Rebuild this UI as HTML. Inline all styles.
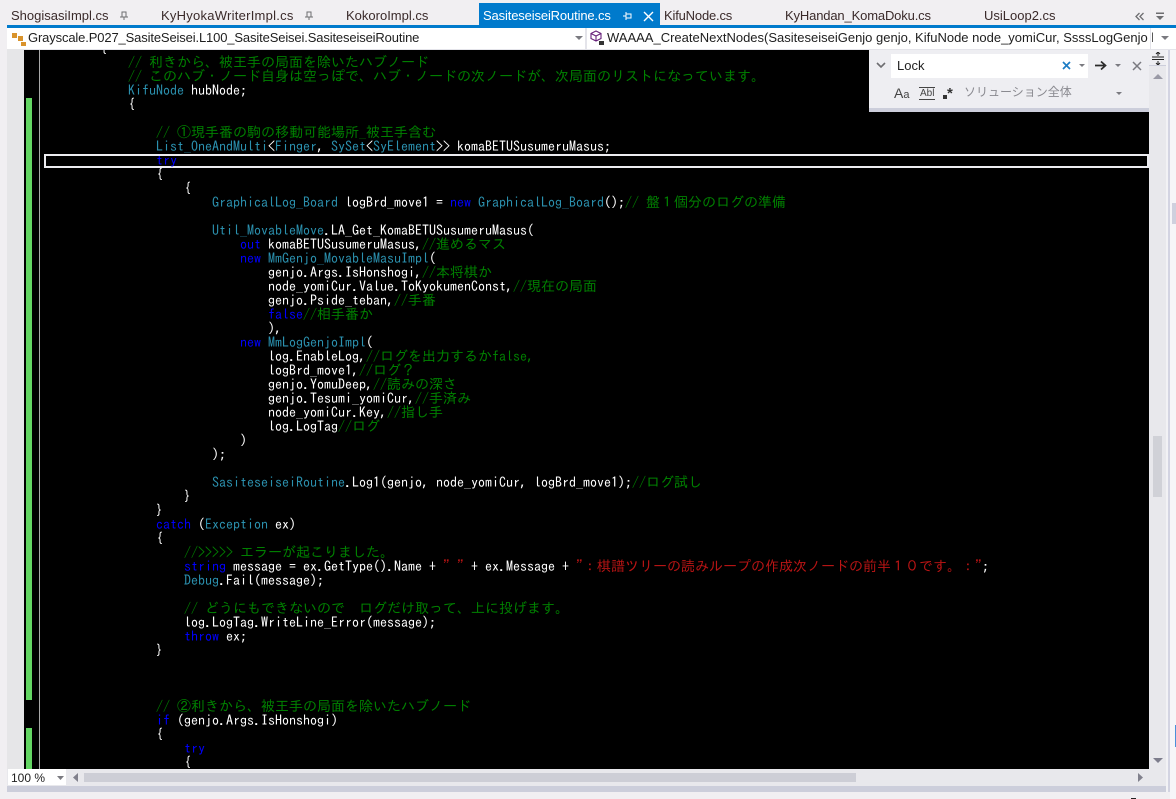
<!DOCTYPE html>
<html lang="ja"><head><meta charset="utf-8"><style>
html,body{margin:0;padding:0;width:1176px;height:799px;overflow:hidden;background:#f1eff2}
div,span.a,svg{position:absolute}
.t{position:absolute;top:7px;font:13px/18px "Liberation Sans","Noto Sans CJK JP",sans-serif;color:#3a2a2a;white-space:nowrap}
.nav{font:13px/18px "Liberation Sans",sans-serif;color:#1e1e1e;white-space:nowrap;position:absolute;letter-spacing:-.14px}
pre{position:absolute;left:44px;top:41px;margin:0;font:14px/14px "IPAGothic","Noto Sans CJK JP",monospace;color:#fff}
i{font-style:normal;color:#008000}b{font-weight:normal;color:#2b91af}u{text-decoration:none;color:#0000ff}s{text-decoration:none;color:#b81414}
</style></head><body>
<!-- tabs -->
<div style="left:0;top:0;width:1176px;height:25px;background:#f1eff2"></div>
<div style="left:479px;top:3px;width:181px;height:22px;background:#007acc"></div>
<span class="t" style="left:11px">ShogisasiImpl.cs</span>
<span class="t" style="left:161px;letter-spacing:.25px">KyHyokaWriterImpl.cs</span>
<span class="t" style="left:346px">KokoroImpl.cs</span>
<span class="t" style="left:483px;color:#fff;letter-spacing:-.14px">SasiteseiseiRoutine.cs</span>
<span class="t" style="left:664px;letter-spacing:-.18px">KifuNode.cs</span>
<span class="t" style="left:785px;letter-spacing:-.15px">KyHandan_KomaDoku.cs</span>
<span class="t" style="left:984px">UsiLoop2.cs</span>
<svg style="left:119px;top:11px" width="10" height="10"><path d="M3 1h4v5H3zM1 6h8M5 6v3" fill="none" stroke="#6d6d70"/></svg>
<svg style="left:304px;top:11px" width="10" height="10"><path d="M3 1h4v5H3zM1 6h8M5 6v3" fill="none" stroke="#6d6d70"/></svg>
<svg style="left:623px;top:11px" width="10" height="10"><path d="M0 5h3M3 1v8M3 3h5v4H3" fill="none" stroke="#fff"/></svg>
<svg style="left:643px;top:11px" width="11" height="11"><path d="M1 1l9 9M10 1l-9 9" fill="none" stroke="#fff" stroke-width="1.4"/></svg>
<svg style="left:1135px;top:12px" width="10" height="9"><path d="M4.500 1L1 4.500l3.500 3.500M8.500 1L5 4.500l3.500 3.500" fill="none" stroke="#6d6d70" stroke-width="1.300"/></svg>
<svg style="left:1156px;top:12px" width="9" height="9"><path d="M0 .5h8v1.500H0zM0 4h8L4 8z" fill="#6d6d70"/></svg>
<div style="left:7px;top:25px;width:1169px;height:3px;background:#007acc"></div>
<!-- nav bar -->
<div style="left:7px;top:28px;width:1169px;height:22px;background:#e4e4ea"></div>
<div style="left:7px;top:28px;width:578px;height:21px;background:#fff"></div>
<div style="left:587px;top:28px;width:563px;height:21px;background:#fff"></div>
<div style="left:1151px;top:28px;width:25px;height:21px;background:#fff"></div>
<svg style="left:11px;top:30px" width="17" height="17"><path d="M1 3h5v5H1zM7 6h5v5H7zM10 12h5v4h-5z" fill="#d9932c"/></svg>
<span class="nav" style="left:28px;top:29px">Grayscale.P027_SasiteSeisei.L100_SasiteSeisei.SasiteseiseiRoutine</span>
<svg style="left:575px;top:36px" width="8" height="5"><path d="M0 0h8L4 4z" fill="#7a7a80"/></svg>
<svg style="left:589px;top:30px" width="17" height="16"><path d="M7 1l5 2.500v5L7 11 2 8.500v-5zM2 3.500L7 6l5-2.500M7 6v5" fill="none" stroke="#68217a" stroke-width="1.100"/><path d="M10 11h5v4h-5z" fill="#333"/></svg>
<span class="nav" style="left:607px;top:29px;width:546px;overflow:hidden;letter-spacing:0">WAAAA_CreateNextNodes(SasiteseiseiGenjo genjo, KifuNode node_yomiCur, SsssLogGenjo log</span>
<svg style="left:1161px;top:36px" width="8" height="5"><path d="M0 0h8L4 4z" fill="#7a7a80"/></svg>
<!-- editor -->
<div style="left:0;top:49px;width:7px;height:750px;background:#f1eff2"></div>
<div style="left:7px;top:49px;width:17px;height:720px;background:#e6e6e8"></div>
<div id="e" style="left:24px;top:50px;width:1125px;height:719px;background:#000;overflow:hidden"></div>
<div style="left:0;top:50px;width:1149px;height:719px;overflow:hidden">
<div style="left:39px;top:0;width:1px;height:719px;background:#a8a8a8"></div>
<div style="left:26px;top:48px;width:6px;height:602px;background:#63d663"></div>
<div style="left:26px;top:678px;width:6px;height:41px;background:#63d663"></div>
<div style="left:44px;top:104px;width:1101px;height:10px;border:2px solid #ececf0"></div>
<pre style="top:-9px">        {
            <i>// 利きから、被王手の局面を除いたハブノード</i>
            <i>// このハブ・ノード自身は空っぽで、ハブ・ノードの次ノードが、次局面のリストになっています。</i>
            <b>KifuNode</b> hubNode;
            {

                <i>// ①現手番の駒の移動可能場所_被王手含む</i>
                <b>List_OneAndMulti</b>&lt;<b>Finger</b>, <b>SySet</b>&lt;<b>SyElement</b>&gt;&gt; komaBETUSusumeruMasus;
                <u>try</u>
                {
                    {
                        <b>GraphicalLog_Board</b> logBrd_move1 = <u>new</u> <b>GraphicalLog_Board</b>();<i>// 盤１個分のログの準備</i>

                        <b>Util_MovableMove</b>.LA_Get_KomaBETUSusumeruMasus(
                            <u>out</u> komaBETUSusumeruMasus,<i>//進めるマス</i>
                            <u>new</u> <b>MmGenjo_MovableMasuImpl</b>(
                                genjo.Args.IsHonshogi,<i>//本将棋か</i>
                                node_yomiCur.Value.ToKyokumenConst,<i>//現在の局面</i>
                                genjo.Pside_teban,<i>//手番</i>
                                <u>false</u><i>//相手番か</i>
                                ),
                            <u>new</u> <b>MmLogGenjoImpl</b>(
                                log.EnableLog,<i>//ログを出力するかfalse,</i>
                                logBrd_move1,<i>//ログ？</i>
                                genjo.YomuDeep,<i>//読みの深さ</i>
                                genjo.Tesumi_yomiCur,<i>//手済み</i>
                                node_yomiCur.Key,<i>//指し手</i>
                                log.LogTag<i>//ログ</i>
                            )
                        );

                        <b>SasiteseiseiRoutine</b>.Log1(genjo, node_yomiCur, logBrd_move1);<i>//ログ試し</i>
                    }
                }
                <u>catch</u> (<b>Exception</b> ex)
                {
                    <i>//&gt;&gt;&gt;&gt;&gt; エラーが起こりました。</i>
                    <u>string</u> message = ex.GetType().Name + <s>" "</s> + ex.Message + <s>"：棋譜ツリーの読みループの作成次ノードの前半１０です。："</s>;
                    <b>Debug</b>.Fail(message);

                    <i>// どうにもできないので　ログだけ取って、上に投げます。</i>
                    log.LogTag.WriteLine_Error(message);
                    <u>throw</u> ex;
                }



                <i>// ②利きから、被王手の局面を除いたハブノード</i>
                <u>if</u> (genjo.Args.IsHonshogi)
                {
                    <u>try</u>
                    {</pre>
</div>
<!-- find widget -->
<div style="left:869px;top:50px;width:280px;height:58px;background:#eeeef2"></div>
<div style="left:869px;top:108px;width:280px;height:4px;background:#cccedb"></div>
<div style="left:891px;top:54px;width:197px;height:24px;background:#fff"></div>
<svg style="left:876px;top:62px" width="10" height="7"><path d="M1 1l4 4 4-4" fill="none" stroke="#6d6d70" stroke-width="1.600"/></svg>
<span class="t" style="left:897px;top:57px;color:#222">Lock</span>
<svg style="left:1062px;top:61px" width="9" height="9"><path d="M1 1l7 7M8 1l-7 7" stroke="#1c7cc4" stroke-width="1.700"/></svg>
<svg style="left:1079px;top:64px" width="7" height="4"><path d="M0 0h6L3 3z" fill="#7a7a80"/></svg>
<svg style="left:1095px;top:60px" width="12" height="11"><path d="M0 5.500h9M6 1.500l4.500 4-4.500 4" fill="none" stroke="#2a2a2a" stroke-width="1.700"/></svg>
<svg style="left:1115px;top:64px" width="7" height="4"><path d="M0 0h6L3 3z" fill="#7a7a80"/></svg>
<svg style="left:1132px;top:61px" width="10" height="10"><path d="M1 1l8 8M9 1l-8 8" stroke="#7a7a80" stroke-width="1.500"/></svg>
<span class="a" style="left:894px;top:85px;font:14px/16px 'Liberation Sans',sans-serif;color:#444">A<span style="font-size:11px">a</span></span>
<span class="a" style="left:919px;top:87px;font:10px/11px 'Liberation Sans',sans-serif;color:#444;border-top:1px solid #444;border-bottom:1px solid #444;padding:0 1px">Abl</span>
<svg style="left:942px;top:86px" width="14" height="14"><path d="M1 9h4v4H1z" fill="#333"/><text x="5" y="12" font-size="15" font-family="Liberation Sans" font-weight="bold" fill="#333">*</text></svg>
<span class="a" style="left:964px;top:84px;font:12px/16px 'Noto Sans CJK JP',sans-serif;color:#8a8a90;white-space:nowrap">ソリューション全体</span>
<svg style="left:1116px;top:92px" width="7" height="4"><path d="M0 0h6L3 3z" fill="#7a7a80"/></svg>
<!-- right scrollbar -->
<div style="left:1149px;top:50px;width:17px;height:719px;background:#e8e8ec"></div>
<div style="left:1166px;top:50px;width:2px;height:742px;background:#f2f2f5"></div>
<div style="left:1168px;top:50px;width:2px;height:742px;background:#d3d4e2"></div>
<div style="left:1170px;top:50px;width:6px;height:749px;background:#f6f5f8"></div>
<div style="left:1172px;top:203px;width:4px;height:21px;background:#cfd0de"></div>
<div style="left:1175px;top:725px;width:1px;height:22px;background:#4a90d9"></div>
<div style="left:1149px;top:50px;width:17px;height:16px;background:#eeeef2;border-bottom:1px solid #cccedb;box-sizing:border-box"></div>
<svg style="left:1151px;top:52px" width="14" height="13"><path d="M1 5h12M1 7.500h12M7 0v4M7 9v4M5 2l2-2 2 2M5 11l2 2 2-2" fill="none" stroke="#222"/></svg>
<svg style="left:1153px;top:74px" width="10" height="6"><path d="M5 0l5 5H0z" fill="#9a9aa6"/></svg>
<div style="left:1153px;top:436px;width:9px;height:61px;background:#d0d1d7"></div>
<svg style="left:1153px;top:758px" width="10" height="6"><path d="M0 0h10L5 5z" fill="#7d7d8c"/></svg>
<!-- bottom -->
<div style="left:7px;top:769px;width:1159px;height:17px;background:#e8e8ec"></div>
<div style="left:7px;top:786px;width:1159px;height:6px;background:#cccedb"></div>
<div style="left:8px;top:769px;width:58px;height:16px;background:#fff"></div>
<span class="a" style="left:11px;top:770px;font:12px/16px 'Liberation Sans',sans-serif;color:#222">100 %</span>
<svg style="left:57px;top:776px" width="8" height="5"><path d="M0 0h7L3.500 4z" fill="#7a7a80"/></svg>
<svg style="left:73px;top:773px" width="6" height="10"><path d="M5 0v9L0 4.500z" fill="#80808c"/></svg>
<div style="left:84px;top:773px;width:772px;height:9px;background:#cdced6"></div>
<svg style="left:1138px;top:773px" width="6" height="10"><path d="M0 0v9l5-4.500z" fill="#80808c"/></svg>
<div style="left:1131px;top:798px;width:5px;height:1px;background:#222"></div>
</body></html>
